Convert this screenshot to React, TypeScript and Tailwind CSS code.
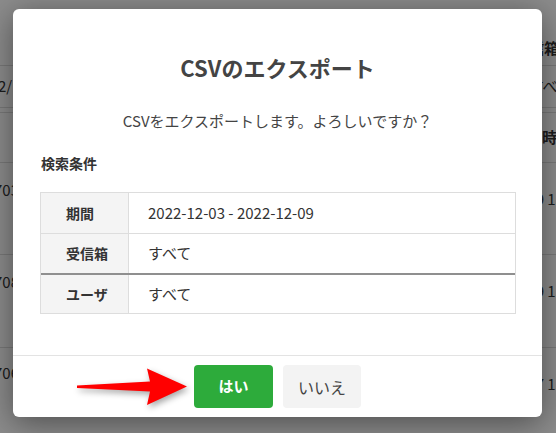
import React from 'react';

const font = { fontFamily: '"Noto Sans CJK JP", "Noto Sans", sans-serif' };

const rows = [
  { label: '期間', value: '2022-12-03 - 2022-12-09' },
  { label: '受信箱', value: 'すべて' },
  { label: 'ユーザ', value: 'すべて' },
];

const PageBehind: React.FC = () => (
  <div className="flex flex-col text-[15px] text-[#333]">
    <div className="h-[66px] flex items-end justify-end pb-[6px] border-b border-[#ddd]">
      <span className="font-bold mr-[-3px]">受信箱</span>
    </div>
    <div className="h-[42px] flex items-center justify-between border-b border-[#ddd]">
      <span className="-ml-[2px]">2/1</span>
      <span className="mr-[-16px]">すべて</span>
    </div>
    <div className="h-[5px] border-b border-[#ddd]" />
    <div className="h-[50px] flex items-center justify-end border-b border-[#ddd]">
      <span className="font-bold mr-[-16px]">受信時間</span>
    </div>
    <div className="h-[92px] flex items-start justify-between pt-[16px] border-b border-[#ddd]">
      <span className="-ml-[6px]">703</span>
      <span className="mt-[9px] mr-[-8px]">09 13</span>
    </div>
    <div className="h-[93px] flex items-start justify-between pt-[16px] border-b border-[#ddd]">
      <span className="-ml-[6px]">708</span>
      <span className="mt-[9px] mr-[-8px]">09 13</span>
    </div>
    <div className="h-[85px] flex items-start justify-between pt-[14px]">
      <span className="-ml-[6px]">706</span>
      <span className="mt-[11px] mr-[-8px]">07 13</span>
    </div>
  </div>
);

const App: React.FC = () => {
  return (
    <div className="relative w-[556px] h-[433px] overflow-hidden bg-white" style={font}>
      <PageBehind />
      <div className="absolute inset-0 bg-black/45" />

      <div className="absolute left-[13px] top-[9px] w-[529px] h-[408px] bg-white rounded-[6px] shadow-[0_6px_32px_rgba(0,0,0,0.45)] flex flex-col">
        <div className="flex-1 px-[27px] pt-[43px]">
          <h2 className="text-center text-[22px] leading-[30px] font-bold text-[#444]">CSVのエクスポート</h2>
          <p className="mt-[28px] text-center text-[15px] leading-[22px] text-[#444]">
            CSVをエクスポートします。よろしいですか？
          </p>
          <h3 className="mt-[20px] pl-[1px] text-[14px] leading-[22px] font-bold text-[#333]">検索条件</h3>
          <div className="mt-[18px] border border-[#ddd] w-[476px]">
            {rows.map((r, i) => (
              <div
                key={r.label}
                className={`flex h-[40px] ${i === 1 ? 'border-t border-[#ddd]' : ''} ${i === 2 ? 'border-t-2 border-[#8f8f8f]' : ''}`}
              >
                <div className="w-[88px] shrink-0 bg-[#f4f4f4] border-r border-[#ddd] flex items-center pl-[25px] text-[14px] font-bold text-[#333]">
                  {r.label}
                </div>
                <div className="flex-1 flex items-center pl-[19px] text-[15px] text-[#333]">{r.value}</div>
              </div>
            ))}
          </div>
        </div>

        <div className="h-[62px] border-t border-[#e3e3e3] flex justify-center items-start pt-[9px] gap-[10px]">
          <button className="w-[79px] h-[43px] rounded-[4px] bg-[#2dab3b] text-white text-[15px] font-bold">はい</button>
          <button className="w-[78px] h-[43px] rounded-[4px] bg-[#f3f3f3] text-[#444] text-[16px]">いいえ</button>
        </div>
      </div>

      <svg
        className="absolute left-[60px] top-[360px] drop-shadow-[2px_3px_3px_rgba(0,0,0,0.35)]"
        width="140"
        height="55"
        viewBox="60 360 140 55"
      >
        <polygon
          points="77,385.5 150,381.5 147,368.5 187,386.5 147,405 150,391.5 77,388"
          fill="#ff0000"
        />
      </svg>
    </div>
  );
};

export default App;
